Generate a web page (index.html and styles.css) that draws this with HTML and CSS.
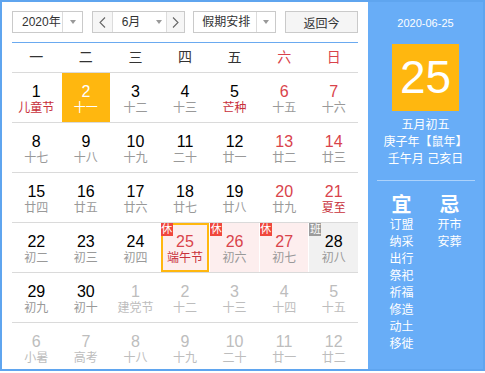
FILE: index.html
```html
<!DOCTYPE html>
<html lang="zh-CN">
<head>
    <meta charset="UTF-8">
    <title>万年历</title>
    <link rel="stylesheet" href="styles.css">
</head>
<body>
    <div class="calendar">
        <div class="main">
            <div class="toolbar">
                <div class="select year-select">
                    <span class="select-text">2020年</span>
                    <span class="select-arrow"><i class="caret"></i></span>
                </div>
                <div class="month-group">
                    <span class="nav-btn nav-prev">
                        <svg width="7" height="11" viewBox="0 0 7 11"><polyline points="6,0.5 1,5.5 6,10.5" fill="none" stroke="#666" stroke-width="1.1"/></svg>
                    </span>
                    <div class="month-select">
                        <span class="select-text">6月</span>
                        <i class="caret"></i>
                    </div>
                    <span class="nav-btn nav-next">
                        <svg width="7" height="11" viewBox="0 0 7 11"><polyline points="1,0.5 6,5.5 1,10.5" fill="none" stroke="#666" stroke-width="1.1"/></svg>
                    </span>
                </div>
                <div class="select holiday-select">
                    <span class="select-text">假期安排</span>
                    <span class="select-arrow"><i class="caret"></i></span>
                </div>
                <button class="today-btn">返回今</button>
            </div>

            <div class="weekdays">
                <span>一</span><span>二</span><span>三</span><span>四</span><span>五</span>
                <span class="weekend">六</span><span class="weekend">日</span>
            </div>

            <div class="week">
                <div class="day"><b>1</b><em class="fest">儿童节</em></div>
                <div class="day today"><b>2</b><em>十一</em></div>
                <div class="day"><b>3</b><em>十二</em></div>
                <div class="day"><b>4</b><em>十三</em></div>
                <div class="day"><b>5</b><em class="fest">芒种</em></div>
                <div class="day weekend"><b>6</b><em>十五</em></div>
                <div class="day weekend"><b>7</b><em>十六</em></div>
            </div>
            <div class="week">
                <div class="day"><b>8</b><em>十七</em></div>
                <div class="day"><b>9</b><em>十八</em></div>
                <div class="day"><b>10</b><em>十九</em></div>
                <div class="day"><b>11</b><em>二十</em></div>
                <div class="day"><b>12</b><em>廿一</em></div>
                <div class="day weekend"><b>13</b><em>廿二</em></div>
                <div class="day weekend"><b>14</b><em>廿三</em></div>
            </div>
            <div class="week">
                <div class="day"><b>15</b><em>廿四</em></div>
                <div class="day"><b>16</b><em>廿五</em></div>
                <div class="day"><b>17</b><em>廿六</em></div>
                <div class="day"><b>18</b><em>廿七</em></div>
                <div class="day"><b>19</b><em>廿八</em></div>
                <div class="day weekend"><b>20</b><em>廿九</em></div>
                <div class="day weekend"><b>21</b><em class="fest">夏至</em></div>
            </div>
            <div class="week">
                <div class="day"><b>22</b><em>初二</em></div>
                <div class="day"><b>23</b><em>初三</em></div>
                <div class="day"><b>24</b><em>初四</em></div>
                <div class="day rest selected"><span class="badge">休</span><b>25</b><em class="fest">端午节</em></div>
                <div class="day rest"><span class="badge">休</span><b>26</b><em>初六</em></div>
                <div class="day rest"><span class="badge">休</span><b>27</b><em>初七</em></div>
                <div class="day work"><span class="badge">班</span><b>28</b><em>初八</em></div>
            </div>
            <div class="week">
                <div class="day"><b>29</b><em>初九</em></div>
                <div class="day"><b>30</b><em>初十</em></div>
                <div class="day other"><b>1</b><em>建党节</em></div>
                <div class="day other"><b>2</b><em>十二</em></div>
                <div class="day other"><b>3</b><em>十三</em></div>
                <div class="day other"><b>4</b><em>十四</em></div>
                <div class="day other"><b>5</b><em>十五</em></div>
            </div>
            <div class="week">
                <div class="day other"><b>6</b><em>小暑</em></div>
                <div class="day other"><b>7</b><em>高考</em></div>
                <div class="day other"><b>8</b><em>十八</em></div>
                <div class="day other"><b>9</b><em>十九</em></div>
                <div class="day other"><b>10</b><em>二十</em></div>
                <div class="day other"><b>11</b><em>廿一</em></div>
                <div class="day other"><b>12</b><em>廿二</em></div>
            </div>
        </div>

        <div class="side">
            <div class="side-date">2020-06-25</div>
            <div class="side-day">25</div>
            <div class="side-lunar">
                <p>五月初五</p>
                <p>庚子年【鼠年】</p>
                <p>壬午月 己亥日</p>
            </div>
            <div class="side-line"></div>
            <div class="almanac">
                <div class="almanac-col">
                    <h4>宜</h4>
                    <p>订盟</p>
                    <p>纳采</p>
                    <p>出行</p>
                    <p>祭祀</p>
                    <p>祈福</p>
                    <p>修造</p>
                    <p>动土</p>
                    <p>移徙</p>
                </div>
                <div class="almanac-col">
                    <h4>忌</h4>
                    <p>开市</p>
                    <p>安葬</p>
                </div>
            </div>
        </div>
    </div>
</body>
</html>
```

FILE: styles.css
```css
* {
    box-sizing: border-box;
}
body {
    margin: 0;
    font-family: "Liberation Sans", "Noto Sans CJK SC", sans-serif;
    color: #333;
    background-color: #fff;
}
.calendar {
    display: flex;
    width: 485px;
    height: 371px;
    border: 2px solid #5fa5ef;
    overflow: hidden;
}

/* left part */
.main {
    width: 366px;
    padding: 9px 10px 0 10px;
    background-color: #fff;
}
.toolbar {
    display: flex;
    justify-content: space-between;
    height: 22px;
    font-size: 12px;
}
.select {
    display: flex;
    border: 1px solid #cacaca;
    background-color: #fff;
}
.select-text {
    line-height: 20px;
    color: #333;
}
.select-arrow {
    display: flex;
    align-items: center;
    justify-content: center;
    width: 20px;
    border-left: 1px solid #dcdcdc;
}
.caret {
    display: block;
    width: 0;
    height: 0;
    border-left: 3px solid transparent;
    border-right: 3px solid transparent;
    border-top: 4px solid #999;
}
.year-select {
    width: 71px;
}
.year-select .select-text {
    width: 49px;
    padding-left: 9px;
}
.holiday-select {
    width: 83px;
}
.holiday-select .select-text {
    width: 62px;
    padding-left: 8px;
}
.month-group {
    display: flex;
    width: 93px;
    border: 1px solid #cacaca;
}
.nav-btn {
    display: flex;
    align-items: center;
    justify-content: center;
    background-color: #f6f6f6;
}
.nav-prev {
    width: 20px;
    border-right: 1px solid #dcdcdc;
}
.nav-next {
    width: 18px;
    border-left: 1px solid #dcdcdc;
}
.month-select {
    flex: 1;
    display: flex;
    align-items: center;
    padding-left: 9px;
}
.month-select .caret {
    margin-left: 16px;
}
.today-btn {
    width: 73px;
    height: 22px;
    padding: 0;
    border: 1px solid #cacaca;
    background-color: #f5f5f5;
    font-family: inherit;
    font-size: 12px;
    color: #333;
}

.weekdays {
    display: grid;
    grid-template-columns: repeat(7, 1fr);
    column-gap: 1px;
    margin-top: 9px;
    height: 31px;
    border-top: 1px solid #6aaaf0;
    border-bottom: 1px solid #dadada;
    font-size: 14px;
    line-height: 29px;
    text-align: center;
}
.weekdays .weekend {
    color: #d9434b;
}

.week {
    display: grid;
    grid-template-columns: repeat(7, 1fr);
    column-gap: 1px;
    height: 50px;
    border-bottom: 1px solid #dadada;
}
.day {
    position: relative;
    height: 49px;
    padding-top: 10px;
    text-align: center;
}
.day b {
    display: block;
    font-weight: normal;
    font-size: 16px;
    line-height: 18px;
    color: #000;
}
.day em {
    display: block;
    font-style: normal;
    font-size: 12px;
    line-height: 14px;
    color: #999;
}
.day em.fest {
    color: #c8303a;
}
.day.weekend b {
    color: #d9434b;
}
.day.other b,
.day.other em {
    color: #bdbdbd;
}
.day.today {
    background-color: #ffb70f;
}
.day.today b,
.day.today em {
    color: #fff;
}
.day.rest {
    background-color: #fdeeee;
}
.day.rest b {
    color: #d9434b;
}
.day.work {
    background-color: #f1f1f1;
}
.day.selected {
    border: 2px solid #ffb70f;
    padding-top: 8px;
}
.badge {
    position: absolute;
    top: 0;
    left: 0;
    width: 12px;
    height: 13px;
    font-size: 11px;
    line-height: 13px;
    color: #fff;
    background-color: #f0473c;
}
.day.selected .badge {
    top: -2px;
    left: -2px;
}
.day.work .badge {
    background-color: #9c9c9c;
}

/* right part */
.side {
    flex: 1;
    padding-top: 14px;
    background-color: #68adf7;
    color: #fff;
    text-align: center;
}
.side-date {
    font-size: 11px;
    line-height: 14px;
}
.side-day {
    width: 67px;
    height: 67px;
    margin: 14px auto 0;
    background-color: #ffb70f;
    font-size: 46px;
    line-height: 67px;
}
.side-lunar {
    margin-top: 6px;
    font-size: 12px;
    line-height: 17px;
}
.side-lunar p,
.almanac p {
    margin: 0;
}
.side-line {
    width: 98px;
    height: 1px;
    margin: 12px auto 0;
    background-color: rgba(255, 255, 255, 0.45);
}
.almanac {
    display: flex;
    justify-content: center;
    margin-top: 12px;
}
.almanac-col {
    width: 48px;
    font-size: 12px;
    line-height: 17px;
}
.almanac h4 {
    margin: 0;
    font-size: 20px;
    line-height: 24px;
    font-weight: bold;
}
```
